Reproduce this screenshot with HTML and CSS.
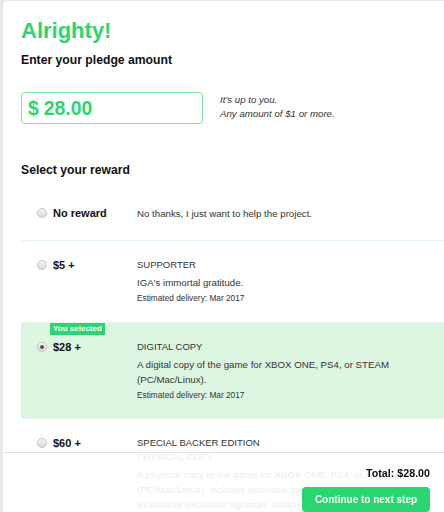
FILE: index.html
```html
<!DOCTYPE html>
<html>
<head>
    <meta charset="utf-8">
    <link rel="stylesheet" href="styles.css">
</head>
<body>
    <div class="panel">
        <h1 class="title">Alrighty!</h1>
        <h2 class="section-title">Enter your pledge amount</h2>

        <div class="pledge-row">
            <div class="amount-box">
                <span class="currency">$</span>
                <span class="amount">28.00</span>
            </div>
            <p class="hint">It's up to you.<br>Any amount of $1 or more.</p>
        </div>

        <h2 class="section-title reward-heading">Select your reward</h2>

        <ul class="rewards">
            <li class="reward reward-none">
                <div class="reward-pick">
                    <span class="radio"></span>
                    <span class="reward-amount">No reward</span>
                </div>
                <div class="reward-info">
                    <p class="reward-desc">No thanks, I just want to help the project.</p>
                </div>
            </li>

            <li class="reward">
                <div class="reward-pick">
                    <span class="radio"></span>
                    <span class="reward-amount">$5 +</span>
                </div>
                <div class="reward-info">
                    <p class="reward-name">SUPPORTER</p>
                    <p class="reward-desc">IGA's immortal gratitude.</p>
                    <p class="reward-delivery">Estimated delivery: Mar 2017</p>
                </div>
            </li>

            <li class="reward selected">
                <span class="selected-badge">You selected</span>
                <div class="reward-pick">
                    <span class="radio checked"></span>
                    <span class="reward-amount">$28 +</span>
                </div>
                <div class="reward-info">
                    <p class="reward-name">DIGITAL COPY</p>
                    <p class="reward-desc">A digital copy of the game for XBOX ONE, PS4, or STEAM (PC/Mac/Linux).</p>
                    <p class="reward-delivery">Estimated delivery: Mar 2017</p>
                </div>
            </li>

            <li class="reward">
                <div class="reward-pick">
                    <span class="radio"></span>
                    <span class="reward-amount">$60 +</span>
                </div>
                <div class="reward-info">
                    <p class="reward-name">SPECIAL BACKER EDITION<br>PHYSICAL COPY</p>
                    <p class="reward-desc">A physical copy of the game for XBOX ONE, PS4, or STEAM (PC/Mac/Linux). Includes exclusive backer box art and a special Kickstarter-exclusive signature edition cover.</p>
                    <p class="reward-delivery">Estimated delivery: Mar 2017</p>
                </div>
            </li>
        </ul>
    </div>

    <div class="footer">
        <div class="total">Total: $28.00</div>
        <button class="continue-button">Continue to next step</button>
    </div>
</body>
</html>
```

FILE: styles.css
```css
body {
    margin: 0;
    background: #e8e8ec;
    font-family: 'Liberation Sans', Arial, sans-serif;
    color: #222;
    overflow: hidden;
}

.panel {
    margin: 1px 0 0 3px;
    padding: 17px 0 120px 18px;
    background: #fff;
    border-radius: 4px 0 0 0;
}

.title {
    margin: 0;
    font-size: 22px;
    line-height: 26px;
    font-weight: bold;
    color: #2bd672;
}

.section-title {
    margin: 8px 0 0 0;
    font-size: 12.2px;
    line-height: 16px;
    font-weight: bold;
    color: #111;
}

.pledge-row {
    display: flex;
    align-items: flex-start;
    gap: 17px;
    margin-top: 24px;
}

.amount-box {
    box-sizing: border-box;
    width: 182px;
    height: 32px;
    padding: 0 6px;
    border: 1px solid #78e6a0;
    border-radius: 4px;
    display: flex;
    align-items: center;
    gap: 5px;
    font-size: 19.4px;
    font-weight: bold;
    color: #2bd672;
}

.hint {
    margin: 1px 0 0 0;
    font-size: 9.7px;
    line-height: 13.5px;
    font-style: italic;
    color: #333;
}

.reward-heading {
    margin-top: 38px;
}

.rewards {
    list-style: none;
    margin: 11px 0 0 0;
    padding: 0;
}

.reward {
    position: relative;
    display: flex;
    align-items: flex-start;
    padding: 17px 0 17px 16px;
    border-bottom: 1px solid #e4f7e8;
}

.reward-none {
    padding-bottom: 19px;
}

.reward.selected {
    background: #ddf6e1;
    padding-bottom: 16px;
}

.reward-pick {
    width: 100px;
    display: flex;
    align-items: flex-start;
    gap: 6px;
}

.radio {
    box-sizing: border-box;
    width: 10px;
    height: 10px;
    margin-top: 2px;
    border-radius: 50%;
    border: 1px solid #c6c6c6;
    background: linear-gradient(#f6f6f6, #d9d9d9);
    display: flex;
    align-items: center;
    justify-content: center;
}

.radio.checked::after {
    content: "";
    width: 4px;
    height: 4px;
    border-radius: 50%;
    background: #555;
}

.reward-amount {
    font-size: 11px;
    line-height: 14px;
    font-weight: bold;
    color: #111;
}

.reward-info {
    width: 290px;
    color: #333;
}

.reward-info p {
    margin: 0;
}

.reward-name {
    font-size: 9.5px;
    line-height: 14px;
    color: #333;
}

.reward-desc {
    font-size: 9.7px;
    line-height: 15px;
}

.reward-name + .reward-desc {
    margin-top: 3px !important;
}

.reward-delivery {
    margin-top: 1px !important;
    font-size: 8.3px;
    line-height: 14px;
}

.selected-badge {
    position: absolute;
    top: 0;
    left: 29px;
    width: 55px;
    height: 12px;
    background: #2bd672;
    color: #fff;
    font-size: 8px;
    line-height: 12px;
    font-weight: bold;
    text-align: center;
}

.footer {
    position: fixed;
    left: 4px;
    right: 0;
    bottom: 0;
    height: 60px;
    box-sizing: border-box;
    padding: 13px 14px 0 0;
    background: rgba(255, 255, 255, 0.9);
    border-top: 1px solid #e2e2e2;
    display: flex;
    flex-direction: column;
    align-items: flex-end;
    gap: 7px;
}

.total {
    font-size: 10.7px;
    line-height: 14px;
    font-weight: bold;
    color: #111;
}

.continue-button {
    width: 128px;
    height: 25px;
    border: none;
    border-radius: 4px;
    background: #2bd672;
    color: #fff;
    font-family: 'Liberation Sans', Arial, sans-serif;
    font-size: 10px;
    font-weight: bold;
    cursor: pointer;
}
```
